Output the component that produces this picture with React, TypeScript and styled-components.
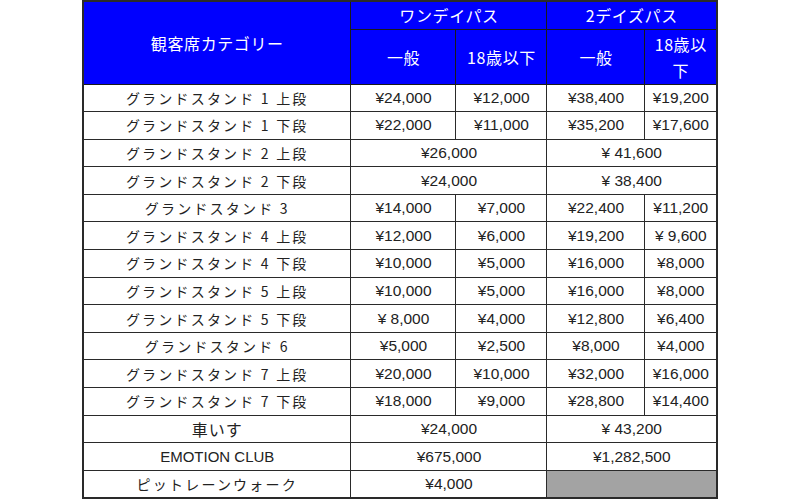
import React from "react";
import styled, { createGlobalStyle } from "styled-components";

// Types -------------------------------------------------------------------------

type Cell = { text: string; span?: number; gray?: boolean };
type Row = { label: string; kind?: "latin" | "large"; cells: Cell[] };

// Data --------------------------------------------------------------------------

const rows: Row[] = [
  { label: "グランドスタンド 1 上段", cells: [{ text: "¥24,000" }, { text: "¥12,000" }, { text: "¥38,400" }, { text: "¥19,200" }] },
  { label: "グランドスタンド 1 下段", cells: [{ text: "¥22,000" }, { text: "¥11,000" }, { text: "¥35,200" }, { text: "¥17,600" }] },
  { label: "グランドスタンド 2 上段", cells: [{ text: "¥26,000", span: 2 }, { text: "¥ 41,600", span: 2 }] },
  { label: "グランドスタンド 2 下段", cells: [{ text: "¥24,000", span: 2 }, { text: "¥ 38,400", span: 2 }] },
  { label: "グランドスタンド 3", cells: [{ text: "¥14,000" }, { text: "¥7,000" }, { text: "¥22,400" }, { text: "¥11,200" }] },
  { label: "グランドスタンド 4 上段", cells: [{ text: "¥12,000" }, { text: "¥6,000" }, { text: "¥19,200" }, { text: "¥ 9,600" }] },
  { label: "グランドスタンド 4 下段", cells: [{ text: "¥10,000" }, { text: "¥5,000" }, { text: "¥16,000" }, { text: "¥8,000" }] },
  { label: "グランドスタンド 5 上段", cells: [{ text: "¥10,000" }, { text: "¥5,000" }, { text: "¥16,000" }, { text: "¥8,000" }] },
  { label: "グランドスタンド 5 下段", cells: [{ text: "¥ 8,000" }, { text: "¥4,000" }, { text: "¥12,800" }, { text: "¥6,400" }] },
  { label: "グランドスタンド 6", cells: [{ text: "¥5,000" }, { text: "¥2,500" }, { text: "¥8,000" }, { text: "¥4,000" }] },
  { label: "グランドスタンド 7 上段", cells: [{ text: "¥20,000" }, { text: "¥10,000" }, { text: "¥32,000" }, { text: "¥16,000" }] },
  { label: "グランドスタンド 7 下段", cells: [{ text: "¥18,000" }, { text: "¥9,000" }, { text: "¥28,800" }, { text: "¥14,400" }] },
  { label: "車いす", kind: "large", cells: [{ text: "¥24,000", span: 2 }, { text: "¥ 43,200", span: 2 }] },
  { label: "EMOTION CLUB", kind: "latin", cells: [{ text: "¥675,000", span: 2 }, { text: "¥1,282,500", span: 2 }] },
  { label: "ピットレーンウォーク", cells: [{ text: "¥4,000", span: 2 }, { text: "", span: 2, gray: true }] },
];

// Component ---------------------------------------------------------------------

const App: React.FC = () => {
  return (
    <>
      <GlobalStyle />
      <Page>
        <Table>
          <colgroup>
            <col style={{ width: 268 }} />
            <col style={{ width: 105 }} />
            <col style={{ width: 91 }} />
            <col style={{ width: 98 }} />
            <col style={{ width: 72 }} />
          </colgroup>
          <thead>
            <HeadRow $height={28}>
              <HeadCell rowSpan={2}>観客席カテゴリー</HeadCell>
              <HeadCell colSpan={2}>ワンデイパス</HeadCell>
              <HeadCell colSpan={2}>2デイズパス</HeadCell>
            </HeadRow>
            <HeadRow $height={55}>
              <HeadCell>一般</HeadCell>
              <HeadCell>18歳以下</HeadCell>
              <HeadCell>一般</HeadCell>
              <HeadCell $narrow>18歳以下</HeadCell>
            </HeadRow>
          </thead>
          <tbody>
            {rows.map((row) => (
              <BodyRow key={row.label}>
                <LabelCell $kind={row.kind}>{row.label}</LabelCell>
                {row.cells.map((cell, i) => (
                  <PriceCell key={i} colSpan={cell.span} $gray={cell.gray}>
                    {cell.text}
                  </PriceCell>
                ))}
              </BodyRow>
            ))}
          </tbody>
        </Table>
      </Page>
    </>
  );
};

export default App;

// Styled ------------------------------------------------------------------------

const GlobalStyle = createGlobalStyle`
  html, body {
    margin: 0;
    padding: 0;
    background: #ffffff;
  }
  body {
    font-family: "Noto Sans CJK JP", "Noto Sans", sans-serif;
  }
`;

const Page = styled.div`
  width: 800px;
  height: 500px;
  display: flex;
  justify-content: center;
  align-items: flex-start;
`;

const Table = styled.table`
  width: 634px;
  table-layout: fixed;
  border-collapse: collapse;
  border: 2px solid #2a2a2a;
  color: #222222;
`;

const HeadRow = styled.tr<{ $height: number }>`
  height: ${({ $height }) => $height}px;
`;

const HeadCell = styled.th<{ $narrow?: boolean }>`
  background: #0000ff;
  color: #ffffff;
  font-weight: 400;
  font-size: 16px;
  letter-spacing: 0.6px;
  text-align: center;
  vertical-align: middle;
  border: 1px solid #1a1a1a;
  padding: ${({ $narrow }) => ($narrow ? "0 4px" : "0")};
  line-height: ${({ $narrow }) => ($narrow ? "26px" : "18px")};
`;

const BodyRow = styled.tr`
  height: 27.6px;
`;

const LabelCell = styled.td<{ $kind?: "latin" | "large" }>`
  border: 1px solid #2a2a2a;
  text-align: center;
  padding: 0;
  line-height: 18px;
  letter-spacing: ${({ $kind }) => ($kind === "latin" ? "0" : $kind === "large" ? "1px" : "2.2px")};
  font-family: ${({ $kind }) =>
    $kind === "latin" ? `"Liberation Sans", Arial, sans-serif` : `"Noto Sans CJK JP", sans-serif`};
  font-size: ${({ $kind }) => ($kind === "latin" ? "15px" : $kind === "large" ? "16px" : "14px")};
`;

const PriceCell = styled.td<{ $gray?: boolean }>`
  border: 1px solid #2a2a2a;
  text-align: center;
  padding: 0;
  line-height: 18px;
  font-family: "Liberation Sans", Arial, sans-serif;
  font-size: 15.5px;
  background: ${({ $gray }) => ($gray ? "#a3a3a3" : "transparent")};
`;
